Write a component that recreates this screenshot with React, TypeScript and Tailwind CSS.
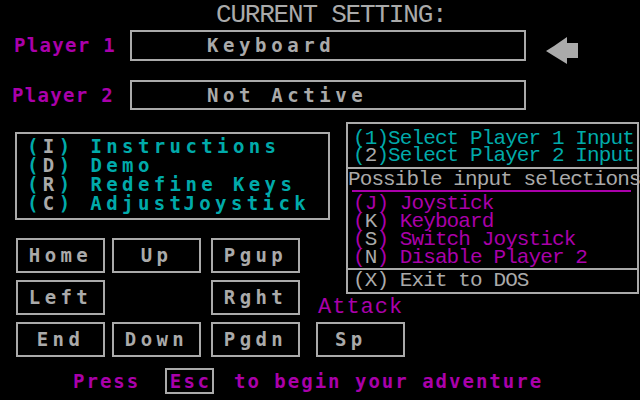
const pix = "font-['DejaVu_Sans_Mono',monospace] font-bold";
const thin = "font-['Liberation_Mono',monospace]";

function Key({ label, center = true }: { label: string; center?: boolean }) {
  return (
    <div
      className={`w-[89px] h-[35px] border-2 border-[#aaaaaa] flex items-center ${
        center ? "justify-center" : "pl-[17px]"
      } ${pix} text-[19px] tracking-[4.4px] text-[#aaaaaa]`}
    >
      {label}
    </div>
  );
}

function MenuLine({ k, text }: { k: string; text: string }) {
  return (
    <div className="whitespace-pre">
      <span>(</span>
      <span className="text-[#aaaaaa]">{k}</span>
      <span>) </span>
      <span>{text}</span>
    </div>
  );
}

function InputLine({ k, text, gray = true }: { k: string; text: string; gray?: boolean }) {
  return (
    <div className="whitespace-pre pl-[5px]">
      (<span className={gray ? "text-[#aaaaaa]" : ""}>{k}</span>) {text}
    </div>
  );
}

export default function App() {
  return (
    <div className="w-[640px] h-[400px] bg-black overflow-hidden flex flex-col select-none">
      {/* header */}
      <div
        className={`h-[30px] pl-[216px] leading-[30px] text-[26px] tracking-[-1.2px] ${thin} text-[#aaaaaa] whitespace-pre`}
      >
        CURRENT SETTING:
      </div>

      {/* player 1 */}
      <div className="h-[31px] flex items-start">
        <div className={`w-[130px] h-[31px] pl-[14px] flex items-center ${pix} text-[19px] tracking-[1.3px] text-[#aa00aa]`}>
          Player 1
        </div>
        <div
          className={`w-[396px] h-[31px] border-2 border-[#aaaaaa] pl-[75px] flex items-center ${pix} text-[19px] tracking-[4.6px] text-[#aaaaaa]`}
        >
          Keyboard
        </div>
        <svg className="ml-[20px] mt-[7px] shrink-0" width="33" height="28" viewBox="0 0 33 28">
          <polygon
            points="0,14 8,9 21,0 21,6 32,6 32,21 21,21 21,27 8,19"
            fill="#aaaaaa"
          />
        </svg>
      </div>

      {/* player 2 */}
      <div className="mt-[19px] flex">
        <div className={`w-[130px] h-[30px] pl-[12px] flex items-center ${pix} text-[19px] tracking-[1.3px] text-[#aa00aa]`}>
          Player 2
        </div>
        <div
          className={`w-[396px] h-[30px] border-2 border-[#aaaaaa] pl-[75px] flex items-center ${pix} text-[19px] tracking-[4.6px] text-[#aaaaaa] whitespace-pre`}
        >
          Not Active
        </div>
      </div>

      {/* middle */}
      <div className="mt-[12px] flex">
        <div className="w-[346px] flex flex-col">
          <div
            className={`mt-[10px] ml-[15px] w-[315px] h-[88px] border-2 border-[#aaaaaa] pt-[3px] pl-[10px] ${pix} text-[19px] leading-[19px] tracking-[4.4px] text-[#00aaaa]`}
          >
            <MenuLine k="I" text="Instructions" />
            <MenuLine k="D" text="Demo" />
            <MenuLine k="R" text="Redefine Keys" />
            <div className="whitespace-pre">
              (<span className="text-[#aaaaaa]">C</span>) Adjust<span className="-ml-[2px]">Joystick</span>
            </div>
          </div>

          <div className="mt-[18px] ml-[16px] grid grid-cols-[89px_89px_89px] grid-rows-[35px_35px_35px] gap-y-[7px]">
            <Key label="Home" />
            <div className="ml-[7px]"><Key label="Up" /></div>
            <div className="ml-[17px]"><Key label="Pgup" /></div>
            <Key label="Left" />
            <div />
            <div className="ml-[17px]"><Key label="Rght" /></div>
            <Key label="End" />
            <div className="ml-[7px]"><Key label="Down" /></div>
            <div className="ml-[17px]"><Key label="Pgdn" /></div>
          </div>
        </div>

        <div className="flex flex-col">
          <div
            className={`w-[293px] h-[172px] border-2 border-[#aaaaaa] flex flex-col ${thin} text-[21px] tracking-[-0.9px] text-[#00aaaa]`}
          >
            <div className="h-[43px] pt-[6px] leading-[17px] pl-[5px] whitespace-pre">
              <div>(1)Select Player 1 Input</div>
              <div>
                (<span className="text-[#aaaaaa]">2</span>)Select Player 2 Input
              </div>
            </div>
            <div className="h-[101px] border-t-2 border-[#aaaaaa] pt-[2px]">
              <div className="leading-[17px] text-[#aaaaaa] whitespace-pre">Possible input selections</div>
              <div className="mt-[2px] ml-[4px] w-[279px] h-[2px] bg-[#aa00aa]" />
              <div className="mt-[3px] leading-[18px] text-[#aa00aa]">
                <InputLine k="J" text="Joystick" gray={false} />
                <InputLine k="K" text="Keyboard" />
                <InputLine k="S" text="Switch Joystick" />
                <InputLine k="N" text="Disable Player 2" />
              </div>
            </div>
            <div className="flex-1 border-t-2 border-[#aaaaaa] pt-[2px] leading-[17px] text-[#aaaaaa] pl-[5px] whitespace-pre">
              (X) Exit to DOS
            </div>
          </div>

          <div className="-ml-[30px] flex flex-col">
            <div className={`h-[28px] pl-[2px] pt-[3px] leading-[22px] text-[22px] tracking-[1px] ${thin} text-[#aa00aa]`}>
              Attack
            </div>
            <Key label="Sp" center={false} />
          </div>
        </div>
      </div>

      {/* bottom */}
      <div className={`mt-[11px] h-[26px] flex items-center pl-[73px] ${pix} text-[19px] tracking-[2px] text-[#aa00aa] whitespace-pre`}>
        <span className="w-[92px]">Press</span>
        <span className="w-[49px] h-[26px] border-2 border-[#aaaaaa] flex items-center justify-center tracking-[2.4px] pl-[2px]">
          Esc
        </span>
        <span className="ml-[20px]">to begin your adventure</span>
      </div>
    </div>
  );
}
